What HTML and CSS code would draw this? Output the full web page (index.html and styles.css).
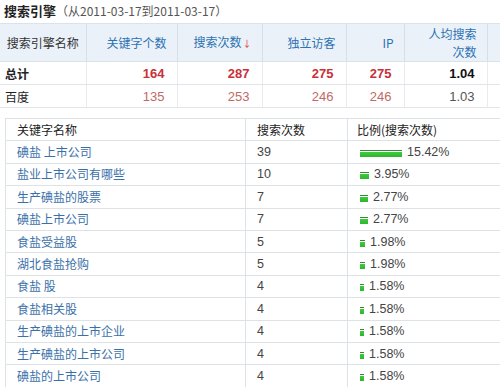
FILE: index.html
```html
<!DOCTYPE html>
<html lang="zh-CN">
<head>
<meta charset="utf-8">
<link rel="stylesheet" href="styles.css">
</head>
<body>
<div class="page">
  <div class="title"><b>搜索引擎</b><span class="range">（从2011-03-17到2011-03-17）</span></div>
  <table class="summary">
    <colgroup>
      <col class="c1"><col class="c2"><col class="c3"><col class="c4"><col class="c5"><col class="c6"><col class="c7">
    </colgroup>
    <thead>
      <tr>
        <th class="name">搜索引擎名称</th>
        <th>关键字个数</th>
        <th>搜索次数<span class="arrow">↓</span></th>
        <th>独立访客</th>
        <th>IP</th>
        <th>人均搜索<br>次数</th>
        <th class="blank"></th>
      </tr>
    </thead>
    <tbody>
      <tr class="total">
        <td class="label">总计</td>
        <td class="red">164</td>
        <td class="red">287</td>
        <td class="red">275</td>
        <td class="red">275</td>
        <td class="dark">1.04</td>
        <td></td>
      </tr>
      <tr class="engine">
        <td class="label">百度</td>
        <td class="red">135</td>
        <td class="red">253</td>
        <td class="red">246</td>
        <td class="red">246</td>
        <td class="dark">1.03</td>
        <td></td>
      </tr>
    </tbody>
  </table>

  <table class="keywords">
    <colgroup><col class="k1"><col class="k2"><col class="k3"></colgroup>
    <thead>
      <tr><th>关键字名称</th><th>搜索次数</th><th>比例(搜索次数)</th></tr>
    </thead>
    <tbody>
      <tr><td><a>碘盐 上市公司</a></td><td>39</td><td><span class="bar" style="width:42px"></span>15.42%</td></tr>
      <tr><td><a>盐业上市公司有哪些</a></td><td>10</td><td><span class="bar" style="width:9px"></span>3.95%</td></tr>
      <tr><td><a>生产碘盐的股票</a></td><td>7</td><td><span class="bar" style="width:8px"></span>2.77%</td></tr>
      <tr><td><a>碘盐上市公司</a></td><td>7</td><td><span class="bar" style="width:8px"></span>2.77%</td></tr>
      <tr><td><a>食盐受益股</a></td><td>5</td><td><span class="bar" style="width:5px"></span>1.98%</td></tr>
      <tr><td><a>湖北食盐抢购</a></td><td>5</td><td><span class="bar" style="width:5px"></span>1.98%</td></tr>
      <tr><td><a>食盐 股</a></td><td>4</td><td><span class="bar" style="width:4px"></span>1.58%</td></tr>
      <tr><td><a>食盐相关股</a></td><td>4</td><td><span class="bar" style="width:4px"></span>1.58%</td></tr>
      <tr><td><a>生产碘盐的上市企业</a></td><td>4</td><td><span class="bar" style="width:4px"></span>1.58%</td></tr>
      <tr><td><a>生产碘盐的上市公司</a></td><td>4</td><td><span class="bar" style="width:4px"></span>1.58%</td></tr>
      <tr><td><a>碘盐的上市公司</a></td><td>4</td><td><span class="bar" style="width:4px"></span>1.58%</td></tr>
    </tbody>
  </table>
</div>
</body>
</html>
```

FILE: styles.css
```css
html, body {
  margin: 0;
  padding: 0;
  background: #fff;
}
body {
  width: 500px;
  height: 387px;
  overflow: hidden;
  font-family: "Noto Sans CJK SC", "Liberation Sans", sans-serif;
  font-size: 12px;
  color: #333;
}
.page {
  width: 500px;
  height: 387px;
  overflow: hidden;
}
.title {
  height: 23px;
  line-height: 22px;
  padding-left: 4px;
  box-sizing: border-box;
  white-space: nowrap;
}
.title b {
  font-size: 13px;
  color: #222;
}
.range {
  color: #555;
  font-size: 12px;
}
table {
  border-collapse: collapse;
  table-layout: fixed;
}
.summary {
  width: 540px;
}
.summary .c1 { width: 86px; }
.summary .c2 { width: 91px; }
.summary .c3 { width: 85px; }
.summary .c4 { width: 84px; }
.summary .c5 { width: 58px; }
.summary .c6 { width: 83px; }
.summary .c7 { width: 53px; }
.summary th {
  background: #eaf1f8;
  color: #2c72b3;
  font-weight: normal;
  height: 38px;
  padding: 0 10px 0 0;
  text-align: right;
  line-height: 18px;
  border-top: 1px solid #dbe3ea;
  border-bottom: 1px solid #dbe3ea;
  border-left: 1px solid #d6dfe8;
  box-sizing: border-box;
}
.summary th.name {
  text-align: center;
  color: #333;
  padding: 0;
  border-left: none;
}
.summary .arrow {
  color: #d33;
  font-size: 9px;
  margin-left: 1px;
}
.summary td {
  height: 23px;
  padding: 0 12px 0 0;
  text-align: right;
  border-bottom: 1px solid #e2e6ea;
  border-left: 1px solid #e8ecef;
  font-family: "Liberation Sans", "Noto Sans CJK SC", sans-serif;
  font-size: 13px;
  box-sizing: border-box;
}
.summary td.label {
  text-align: left;
  padding: 0 0 0 5px;
  font-family: "Noto Sans CJK SC", sans-serif;
  font-size: 12px;
  border-left: none;
  color: #222;
}
.summary .total td {
  font-weight: bold;
}
.summary .total td.red { color: #c8303a; }
.summary .total td.dark { color: #111; }
.summary .engine td.red { color: #c06a66; }
.summary .engine td.dark { color: #555; }

.keywords {
  margin: 10px 0 0 5px;
  width: 520px;
  border-left: 1px solid #dde2e7;
}
.keywords .k1 { width: 240px; }
.keywords .k2 { width: 102px; }
.keywords .k3 { width: 178px; }
.keywords th,
.keywords td {
  height: 22.4px;
  padding: 0 0 0 11px;
  text-align: left;
  font-weight: normal;
  border-top: 1px solid #dde2e7;
  border-bottom: 1px solid #dde2e7;
  border-left: 1px solid #dde2e7;
  box-sizing: border-box;
  font-size: 12px;
  line-height: 14px;
  white-space: nowrap;
}
.keywords th {
  color: #222;
}
.keywords td {
  color: #444;
}
.keywords td:nth-child(3),
.keywords th:nth-child(3) {
  padding-left: 9px;
}
.keywords td:nth-child(2),
.keywords td:nth-child(3) {
  font-family: "Liberation Sans", sans-serif;
  font-size: 12.5px;
}
.keywords a {
  color: #3a70a8;
  text-decoration: none;
}
.bar {
  display: inline-block;
  vertical-align: -1px;
  height: 7px;
  margin-right: 5px;
  margin-left: 3px;
  background: linear-gradient(#2c8f2c 0, #2c8f2c 1px, #fff 1px, #fff 2px, #3ecb3e 2px, #2fb52f 7px);
}
```
